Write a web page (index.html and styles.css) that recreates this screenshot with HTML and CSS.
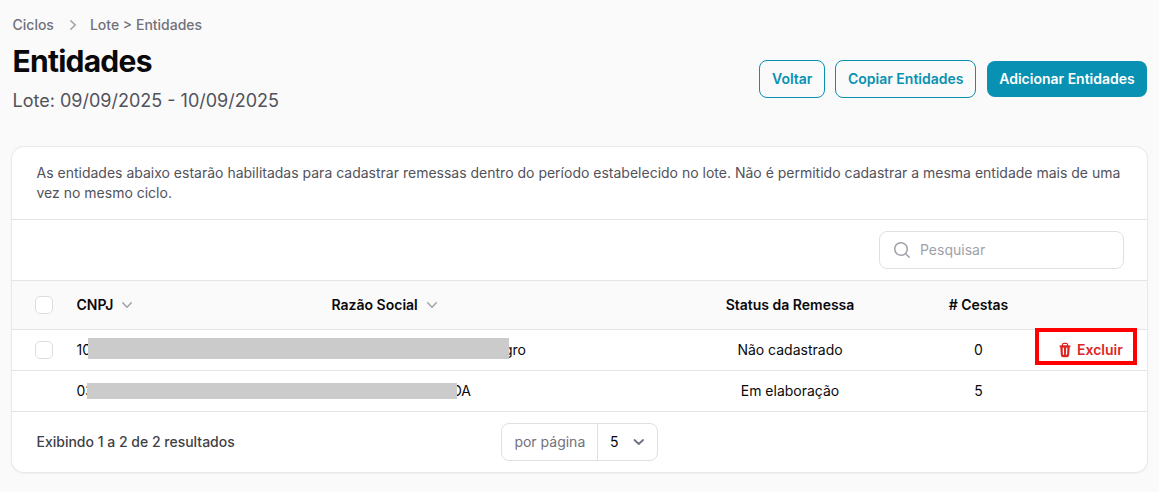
FILE: index.html
```html
<!DOCTYPE html>
<html lang="pt-BR">
<head>
<meta charset="utf-8">
<title>Entidades</title>
<link rel="stylesheet" href="styles.css">
</head>
<body>
<header class="page-header">
  <div class="heading">
    <nav class="breadcrumbs">
      <span>Ciclos</span>
      <svg class="crumb-icon" viewBox="0 0 20 20" fill="currentColor"><path fill-rule="evenodd" d="M7.21 14.77a.75.75 0 0 1 .02-1.06L11.168 10 7.23 6.29a.75.75 0 1 1 1.04-1.08l4.5 4.25a.75.75 0 0 1 0 1.08l-4.5 4.25a.75.75 0 0 1-1.06-.02Z" clip-rule="evenodd"/></svg>
      <span>Lote &gt; Entidades</span>
    </nav>
    <h1 class="title">Entidades</h1>
    <p class="subtitle">Lote: 09/09/2025 - 10/09/2025</p>
  </div>
  <div class="actions">
    <button class="btn btn-outline btn-back">Voltar</button>
    <button class="btn btn-outline btn-copy">Copiar Entidades</button>
    <button class="btn btn-primary">Adicionar Entidades</button>
  </div>
</header>

<main class="card">
  <p class="description">As entidades abaixo estarão habilitadas para cadastrar remessas dentro do período estabelecido no lote. Não é permitido cadastrar a mesma entidade mais de uma vez no mesmo ciclo.</p>
  <div class="toolbar">
    <label class="search">
      <svg class="search-icon" viewBox="0 0 20 20" fill="currentColor"><path fill-rule="evenodd" d="M9 3.5a5.5 5.5 0 1 0 0 11 5.5 5.5 0 0 0 0-11ZM2 9a7 7 0 1 1 12.452 4.391l3.328 3.329a.75.75 0 1 1-1.06 1.06l-3.329-3.328A7 7 0 0 1 2 9Z" clip-rule="evenodd"/></svg>
      <input class="search-input" type="text" placeholder="Pesquisar">
    </label>
  </div>
  <div class="row row-head">
    <span class="checkbox"></span>
    <span class="sortable">CNPJ <svg class="sort-icon" viewBox="0 0 20 20" fill="currentColor"><path fill-rule="evenodd" d="M5.23 7.21a.75.75 0 0 1 1.06.02L10 11.168l3.71-3.938a.75.75 0 1 1 1.08 1.04l-4.25 4.5a.75.75 0 0 1-1.08 0l-4.25-4.5a.75.75 0 0 1 .02-1.06Z" clip-rule="evenodd"/></svg></span>
    <span class="sortable">Razão Social <svg class="sort-icon" viewBox="0 0 20 20" fill="currentColor"><path fill-rule="evenodd" d="M5.23 7.21a.75.75 0 0 1 1.06.02L10 11.168l3.71-3.938a.75.75 0 1 1 1.08 1.04l-4.25 4.5a.75.75 0 0 1-1.08 0l-4.25-4.5a.75.75 0 0 1 .02-1.06Z" clip-rule="evenodd"/></svg></span>
    <span class="center">Status da Remessa</span>
    <span class="center"># Cestas</span>
    <span></span>
  </div>
  <div class="row">
    <span class="checkbox"></span>
    <div class="redacted redacted-first">
      <span>10</span><span class="tail">gro</span>
      <span class="mask"></span>
    </div>
    <span class="center">Não cadastrado</span>
    <span class="center">0</span>
    <span class="delete">
      <svg class="trash-icon" viewBox="0 0 20 20" fill="currentColor"><path fill-rule="evenodd" d="M8.75 1A2.75 2.75 0 0 0 6 3.75v.443c-.795.077-1.584.176-2.365.298a.75.75 0 1 0 .23 1.482l.149-.022.841 10.518A2.75 2.75 0 0 0 7.596 19h4.807a2.75 2.75 0 0 0 2.742-2.53l.841-10.52.149.023a.75.75 0 0 0 .23-1.482A41.03 41.03 0 0 0 14 4.193V3.75A2.75 2.75 0 0 0 11.25 1h-2.5ZM10 4c.84 0 1.673.025 2.5.075V3.75c0-.69-.56-1.25-1.25-1.25h-2.5c-.69 0-1.25.56-1.25 1.25v.325C8.327 4.025 9.16 4 10 4ZM8.58 7.72a.75.75 0 0 0-1.5.06l.3 7.5a.75.75 0 1 0 1.5-.06l-.3-7.5Zm4.34.06a.75.75 0 1 0-1.5-.06l-.3 7.5a.75.75 0 1 0 1.5.06l.3-7.5Z" clip-rule="evenodd"/></svg>
      Excluir
      <span class="highlight"></span>
    </span>
  </div>
  <div class="row">
    <span></span>
    <div class="redacted redacted-second">
      <span>03</span><span class="tail">DA</span>
      <span class="mask"></span>
    </div>
    <span class="center">Em elaboração</span>
    <span class="center">5</span>
    <span></span>
  </div>
  <footer class="pagination">
    <span class="summary">Exibindo 1 a 2 de 2 resultados</span>
    <div class="per-page">
      <span class="per-page-label">por página</span>
      <span class="per-page-value">5
        <svg class="select-icon" viewBox="0 0 20 20" fill="none" stroke="currentColor" stroke-width="1.8" stroke-linecap="round" stroke-linejoin="round"><path d="M5.5 8l4.25 4 4.25-4"/></svg>
      </span>
    </div>
  </footer>
</main>
</body>
</html>
```
FILE: styles.css
```css
* { box-sizing: border-box; }

body {
  margin: 0;
  padding: 15px 12px 0;
  height: 492px;
  overflow: hidden;
  background: #fafafa;
  color: #09090b;
  font: 400 14px/20px Inter, "Liberation Sans", sans-serif;
}

h1, p { margin: 0; }

.page-header {
  display: flex;
  justify-content: space-between;
  height: 132px;
}

.heading { padding-left: 0.5px; }

.breadcrumbs {
  display: flex;
  align-items: center;
  gap: 8px;
  height: 20px;
  color: #71717a;
  font-weight: 500;
}

.crumb-icon { width: 20px; height: 20px; margin: 0 -1px 0 1px; color: #a1a1aa; }

.title {
  margin-top: 8px;
  font-size: 30px;
  line-height: 36px;
  font-weight: 700;
  letter-spacing: -0.75px;
}

.subtitle {
  margin-top: 8px;
  color: #52525b;
  font-size: 18px;
  line-height: 28px;
}

.actions {
  display: flex;
  align-items: center;
  height: 38px;
  margin-top: 45px;
}

.btn {
  height: 36px;
  padding: 0 12px;
  border: 0;
  border-radius: 8px;
  font: 600 14px/20px Inter, "Liberation Sans", sans-serif;
  white-space: nowrap;
}

.btn-outline {
  height: 38px;
  border: 1px solid #0891b2;
  background: transparent;
  color: #0891b2;
}

.btn-back { width: 66px; margin-right: 10px; }
.btn-copy { width: 141px; margin-right: 11px; }
.btn-primary { width: 160px; background: #0891b2; color: #fff; }

.card {
  height: 325px;
  border-radius: 12px;
  background: #fff;
  box-shadow: 0 0 0 1px #e9e9ea, 0 1px 2px 1px rgba(0, 0, 0, 0.04);
  overflow: hidden;
}

.description {
  height: 73px;
  padding: 16px 24px 16px 24.5px;
  border-bottom: 1px solid #e4e4e7;
  color: #52525b;
}

.toolbar {
  display: flex;
  align-items: center;
  justify-content: flex-end;
  height: 61px;
  padding: 0 23px;
  border-bottom: 1px solid #e4e4e7;
}

.search {
  display: flex;
  align-items: center;
  gap: 8px;
  width: 245px;
  height: 38px;
  padding: 0 12px;
  border: 1px solid #e0e0e2;
  border-radius: 8px;
}

.search-icon { flex: none; width: 20px; height: 20px; color: #a1a1aa; }

.search-input {
  flex: 1;
  min-width: 0;
  padding: 0;
  border: 0;
  outline: 0;
  background: transparent;
  font: inherit;
}

.search-input::placeholder { color: #a1a1aa; }

.row {
  display: grid;
  grid-template-columns: 64.5px 255px 356.5px 204px 173px 82px;
  align-items: center;
  height: 41px;
  border-bottom: 1px solid #e4e4e7;
}

.row-head { height: 49px; background: #fafafa; font-weight: 600; }

.checkbox {
  width: 18px;
  height: 18px;
  margin-left: 23px;
  border: 1px solid #dedee0;
  border-radius: 5px;
  background: #fff;
}

.sortable { display: flex; align-items: center; gap: 4px; }
.sort-icon { width: 20px; height: 20px; color: #a1a1aa; }
.center { text-align: center; }

.redacted {
  position: relative;
  display: flex;
  grid-column: 2 / 4;
}

.redacted-first { width: 449.5px; }
.redacted-second { width: 394.5px; }
.tail { margin-left: auto; }
.mask { position: absolute; background: #cbcbcb; }
.redacted-first .mask { top: -2px; left: 11.5px; width: 421px; height: 21px; }
.redacted-second .mask { top: 2px; left: 10.5px; width: 370px; height: 16px; }

.delete {
  position: relative;
  display: flex;
  align-items: center;
  gap: 4px;
  margin-left: -8px;
  color: #dc2626;
  font-weight: 600;
}

.trash-icon { width: 16px; height: 16px; }

.highlight {
  position: absolute;
  top: -12px;
  left: -22px;
  width: 102px;
  height: 37px;
  border: 4px solid #f00;
}

.pagination {
  display: flex;
  align-items: center;
  height: 60px;
  padding: 0 24px 0 24.5px;
}

.summary { width: 464.5px; color: #3f3f46; font-weight: 500; }

.per-page {
  display: flex;
  width: 157px;
  height: 38px;
  border: 1px solid #e0e0e2;
  border-radius: 8px;
}

.per-page-label {
  width: 96px;
  padding: 8px 0 8px 12.4px;
  border-right: 1px solid #e0e0e2;
  color: #71717a;
}

.per-page-value {
  display: flex;
  flex: 1;
  align-items: center;
  justify-content: space-between;
  padding: 0 8px 0 12px;
}

.select-icon { width: 20px; height: 20px; color: #6b7280; }
```
